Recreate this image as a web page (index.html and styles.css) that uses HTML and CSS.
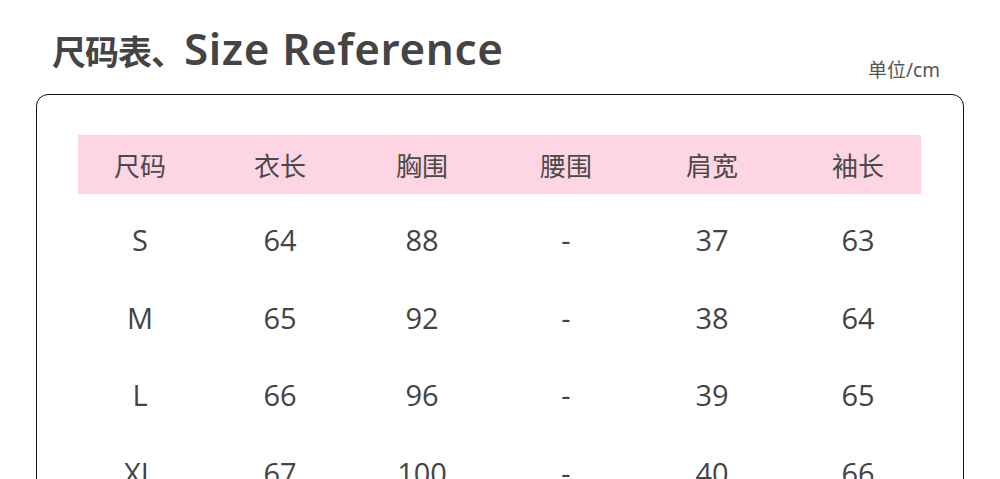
FILE: index.html
```html
<!DOCTYPE html>
<html lang="zh">
<head>
<meta charset="utf-8">
<title>尺码表</title>
<link rel="stylesheet" href="styles.css">
</head>
<body>
<div class="page">
  <div class="head">
    <h1 class="title"><span class="cjk">尺码表、</span><span class="latin">Size Reference</span></h1>
    <div class="unit">单位/cm</div>
  </div>
  <div class="box">
    <div class="row band">
      <div class="cell">尺码</div><div class="cell">衣长</div><div class="cell">胸围</div><div class="cell">腰围</div><div class="cell">肩宽</div><div class="cell">袖长</div>
    </div>
    <div class="row data">
      <div class="cell">S</div><div class="cell">64</div><div class="cell">88</div><div class="cell">-</div><div class="cell">37</div><div class="cell">63</div>
    </div>
    <div class="row data">
      <div class="cell">M</div><div class="cell">65</div><div class="cell">92</div><div class="cell">-</div><div class="cell">38</div><div class="cell">64</div>
    </div>
    <div class="row data">
      <div class="cell">L</div><div class="cell">66</div><div class="cell">96</div><div class="cell">-</div><div class="cell">39</div><div class="cell">65</div>
    </div>
    <div class="row data">
      <div class="cell">XL</div><div class="cell">67</div><div class="cell">100</div><div class="cell">-</div><div class="cell">40</div><div class="cell">66</div>
    </div>
  </div>
</div>
</body>
</html>
```

FILE: styles.css
```css
html, body {
  margin: 0;
  padding: 0;
  background: #fff;
}
body {
  font-family: "Open Sans", "Noto Sans", "Noto Sans CJK SC", sans-serif;
  color: #444;
  overflow: hidden;
  height: 479px;
}
.page {
  padding: 0 36px;
}
.head {
  display: flex;
  justify-content: space-between;
  align-items: flex-end;
  height: 82px;
  padding: 0 24px 0 16px;
}
.title {
  margin: 0;
  align-self: flex-start;
  padding-top: 22px;
  line-height: 52px;
  color: #444;
  white-space: nowrap;
}
.title .cjk {
  font-family: "Noto Sans CJK SC", sans-serif;
  font-weight: 700;
  font-size: 34px;
  letter-spacing: -1px;
}
.title .latin {
  font-family: "Noto Sans", sans-serif;
  font-weight: 600;
  font-size: 44px;
  letter-spacing: 0.6px;
}
.unit {
  font-family: "Noto Sans", "Noto Sans CJK SC", sans-serif;
  font-size: 19px;
  color: #555;
  line-height: 24px;
}
.box {
  margin-top: 12px;
  border: 1.5px solid #111;
  border-radius: 12px;
  padding: 40px 42px 0 41px;
  height: 480px;
  box-sizing: border-box;
}
.row {
  display: grid;
  grid-template-columns: 124px 156px 128px 160px 132px 143px;
  align-items: center;
}
.band {
  background: #fed5e3;
  height: 59px;
  font-family: "Noto Sans CJK SC", sans-serif;
  font-size: 26px;
  color: #4a4a4a;
}
.data {
  height: 77.5px;
  font-size: 29px;
  color: #444;
}
.band + .data {
  margin-top: 7px;
}
.cell {
  text-align: center;
  line-height: 1;
}
.cell:last-child {
  padding-left: 17px;
}
```
